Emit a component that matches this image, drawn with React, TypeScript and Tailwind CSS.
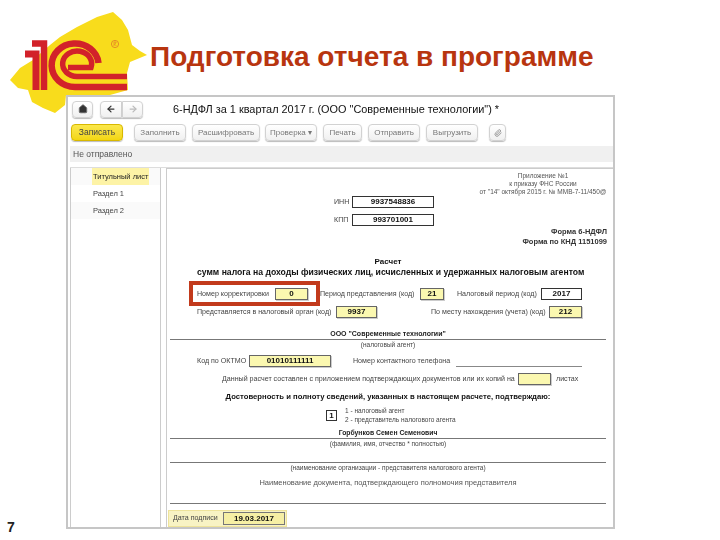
import { ArrowLeft, ArrowRight, Home, Paperclip } from 'lucide-react';
import type { ReactNode } from 'react';

const Logo = () => (
  <svg className="absolute left-0 top-0 blur-[0.3px]" width="160" height="125" viewBox="0 0 160 125">
    <path
      d="M10 80 L20 68 L33 60 L50 45 L60 37 L77 27 L97 17 L113 12 L122 20 L128 30 L132 45 L140 51 L147 55 L130 62 L127 73 L128 90 L110 95 L66 95 L65 105 L55 113 L43 108 L32 102 L28 90 L18 88 Z"
      fill="#f8dc1c"
    />
    <g fill="none" stroke="#d2222a">
      <path d="M25 54 H36 V90" strokeWidth="7" />
      <path d="M32 43.5 H44 V90" strokeWidth="6.5" />
      <path d="M127 87 H75 A23.5 21.75 0 1 1 98.5 63" strokeWidth="6.5" />
      <path d="M127 76.5 H77 A14.5 12.75 0 1 1 91 67.5 H68" strokeWidth="5.5" />
    </g>
    <circle cx="115" cy="44" r="3.6" fill="none" stroke="#e0762a" strokeWidth="0.8" />
    <path d="M114 46 V42 H116 Q116.8 43.2 114.4 44 L116.4 46" fill="none" stroke="#e0762a" strokeWidth="0.6" />
  </svg>
);

const ToolButton = ({ children, className }: { children: ReactNode; className: string }) => (
  <div className={`flex h-[17px] items-center justify-center whitespace-nowrap rounded-sm border border-[#d2d2d2] bg-gradient-to-b from-white to-[#f0f0f0] text-[8px] text-[#777] shadow-[0_1px_1px_#bbb] ${className}`}>
    {children}
  </div>
);

const Box = ({ children, className }: { children?: ReactNode; className: string }) => (
  <div className={`flex h-full shrink-0 items-center justify-center border font-bold text-[8px] text-[#111] ${className}`}>
    {children}
  </div>
);

const yellow = 'border-[#666] bg-[#fbf8b0] shadow-[1px_1px_0_#ccc]';
const white = 'border-[#333] bg-white';

const Label = ({ children, className }: { children: ReactNode; className: string }) => (
  <div className={`shrink-0 whitespace-nowrap text-[7.1px] text-[#444] ${className}`}>{children}</div>
);

const Rule = () => <div className="mx-[3px] border-b border-[#777]" />;

export default function App() {
  return (
    <div className="relative flex h-[540px] w-[720px] flex-col overflow-hidden bg-white font-['Liberation_Sans',sans-serif]">
      <Logo />
      <header className="relative flex h-[95px] shrink-0 items-start pl-[150px] pt-[40px]">
        <h1 className="whitespace-nowrap text-[28px] font-bold leading-[34px] text-[#b8350f]">Подготовка отчета в программе</h1>
      </header>

      <div className="flex flex-1">
        <div className="flex h-[440px] w-[66px] shrink-0 items-end pl-[7px]">
          <span className="text-[14px] font-bold leading-[16px] text-[#222]">7</span>
        </div>

        <main className="relative flex h-[434px] w-[549px] shrink-0 flex-col border-2 border-[#c6c6c6] bg-white pl-[2px] blur-[0.3px]">
          <div className="flex h-[27px] shrink-0 items-center pl-[2px] pb-[3px]">
            <ToolButton className="w-[21px] text-[#333]"><Home size={10} fill="#333" strokeWidth={2} /></ToolButton>
            <div className="ml-[7px] flex w-[43px]">
              <ToolButton className="w-[22px] rounded-r-none"><ArrowLeft size={10} color="#333" strokeWidth={3} /></ToolButton>
              <ToolButton className="w-[21px] rounded-l-none"><ArrowRight size={10} color="#bbb" strokeWidth={3} /></ToolButton>
            </div>
            <div className="ml-[30px] whitespace-nowrap text-[10.9px] text-[#111]">6-НДФЛ за 1 квартал 2017 г. (ООО "Современные технологии") *</div>
          </div>

          <div className="flex h-[22px] shrink-0 items-start pl-[1px]">
            <div className="flex h-[17px] w-[52px] items-center justify-center rounded-sm border border-[#d8b800] bg-gradient-to-b from-[#fbe84a] to-[#f3d60e] text-[8.5px] font-medium text-[#444] shadow-[0_1px_1px_#bbb]">Записать</div>
            <ToolButton className="ml-[11px] w-[52px]">Заполнить</ToolButton>
            <ToolButton className="ml-[6px] w-[68px]">Расшифровать</ToolButton>
            <ToolButton className="ml-[5px] w-[52px]">Проверка ▾</ToolButton>
            <ToolButton className="ml-[6px] w-[39px]">Печать</ToolButton>
            <ToolButton className="ml-[6px] w-[52px]">Отправить</ToolButton>
            <ToolButton className="ml-[6px] w-[52px]">Выгрузить</ToolButton>
            <ToolButton className="ml-[11px] w-[17px]"><Paperclip size={8} /></ToolButton>
          </div>

          <div className="flex h-[16px] shrink-0 items-center bg-[#f0f0f0] pl-[3px] text-[8.5px] text-[#555]">Не отправлено</div>

          <div className="mt-[5px] flex min-h-0 flex-1 border-t border-[#ddd]">
            <aside className="h-full w-[91px] shrink-0 border-x border-[#ccc] text-[7.5px] text-[#444]">
              <div className="flex h-[17px] items-center bg-[#fafafa] pl-[21px]"><span className="bg-[#fdf3a6] px-[1px] leading-[17px] text-[#222]">Титульный лист</span></div>
              <div className="flex h-[17px] items-center pl-[22px]">Раздел 1</div>
              <div className="flex h-[17px] items-center bg-[#fafafa] pl-[22px]">Раздел 2</div>
            </aside>

            <section className="relative ml-[5px] min-w-0 flex-1 border-l border-t border-[#ccc] pr-[4px]">
              {/* шапка формы */}
              <div className="ml-[311px] mt-[3px] w-[130px] whitespace-nowrap text-center text-[6.5px] leading-[8px] text-[#555]">
                <div>Приложение №1</div>
                <div>к приказу ФНС России</div>
                <div>от "14" октября 2015 г. № ММВ-7-11/450@</div>
              </div>

              <div className="flex h-[12px]">
                <Label className="ml-[167px] w-[18px] leading-[12px]">ИНН</Label>
                <Box className={`w-[82px] ${white}`}>9937548836</Box>
              </div>
              <div className="mt-[6px] flex h-[12px]">
                <Label className="ml-[167px] w-[18px] leading-[12px]">КПП</Label>
                <Box className={`w-[82px] ${white}`}>993701001</Box>
              </div>

              <div className="mt-[1px] pr-[2px] text-right text-[7.5px] font-bold leading-[10px] text-[#333]">
                <div>Форма 6-НДФЛ</div>
                <div>Форма по КНД 1151099</div>
              </div>

              <div className="mt-[10px] text-center text-[8px] font-bold leading-[10px] text-[#111]">Расчет</div>
              <div className="ml-[30px] whitespace-nowrap text-[8.65px] font-bold leading-[11px] text-[#111]">сумм налога на доходы физических лиц, исчисленных и удержанных налоговым агентом</div>

              <div className="mt-[10px] flex h-[12px] items-stretch leading-[12px]">
                <Label className="ml-[30px] w-[78px]">Номер корректировки</Label>
                <Box className={`w-[33px] ${yellow}`}>0</Box>
                <Label className="ml-[12px] w-[100px]">Период представления (код)</Label>
                <Box className={`w-[24px] ${yellow}`}>21</Box>
                <Label className="ml-[13px] w-[84px]">Налоговый период (код)</Label>
                <Box className={`w-[41px] ${white}`}>2017</Box>
              </div>
              <div className="mt-[6px] flex h-[12px] items-stretch leading-[12px]">
                <Label className="ml-[30px] w-[139px]">Представляется в налоговый орган (код)</Label>
                <Box className={`w-[41px] ${yellow}`}>9937</Box>
                <Label className="ml-[54px] w-[118px]">По месту нахождения (учета) (код)</Label>
                <Box className={`w-[33px] ${yellow}`}>212</Box>
              </div>

              <div className="mt-[10px] text-center text-[7px] font-bold leading-[11px] text-[#222]">ООО "Современные технологии"</div>
              <Rule />
              <div className="text-center text-[6.5px] leading-[9px] text-[#444]">(налоговый агент)</div>

              <div className="mt-[6px] flex h-[12px] items-stretch leading-[12px]">
                <Label className="ml-[30px] w-[52px]">Код по ОКТМО</Label>
                <Box className={`w-[82px] ${yellow}`}>01010111111</Box>
                <Label className="ml-[22px] w-[103px]">Номер контактного телефона</Label>
                <div className="w-[126px] border-b border-[#888]" />
              </div>
              <div className="mt-[6px] flex h-[12px] items-stretch leading-[12px]">
                <Label className="ml-[55px] w-[296px]">Данный расчет составлен с приложением подтверждающих документов или их копий на</Label>
                <Box className={`w-[33px] ${yellow}`} />
                <Label className="ml-[5px] w-[30px]">листах</Label>
              </div>

              <div className="mt-[6px] text-center text-[7.7px] font-bold leading-[11px] text-[#111]">Достоверность и полноту сведений, указанных в настоящем расчете, подтверждаю:</div>

              <div className="mt-[5px] flex h-[17px] items-center">
                <Box className={`ml-[159px] !h-[11px] w-[11px] ${white}`}>1</Box>
                <div className="ml-[8px] text-[6.5px] leading-[8.5px] text-[#444]">
                  <div>1 - налоговый агент</div>
                  <div>2 - представитель налогового агента</div>
                </div>
              </div>

              <div className="mt-[4px] text-center text-[6.8px] font-bold leading-[10px] text-[#222]">Горбунков Семен Семенович</div>
              <Rule />
              <div className="text-center text-[6.5px] leading-[9px] text-[#444]">(фамилия, имя, отчество * полностью)</div>

              <div className="h-[14px]" />
              <Rule />
              <div className="text-center text-[6.5px] leading-[9px] text-[#444]">(наименование организации - представителя налогового агента)</div>

              <div className="mt-[5px] text-center text-[7.5px] leading-[12px] text-[#555]">Наименование документа, подтверждающего полномочия представителя</div>

              <div className="h-[14px]" />
              <Rule />

              <div className="ml-[1px] mt-[6px] flex h-[17px] w-[119px] items-center border border-[#eee39a] bg-[#f8f3c4] pl-[4px]">
                <Label className="w-[50px]">Дата подписи</Label>
                <Box className="!h-[13px] w-[62px] border-[#777] bg-[#f6efa4]">19.03.2017</Box>
              </div>

              {/* красная рамка поверх поля корректировки */}
              <div className="absolute left-[22px] top-[112px] h-[25px] w-[131px] border-[4px] border-[#c23a1c]" />
            </section>
          </div>
        </main>
      </div>
    </div>
  );
}
